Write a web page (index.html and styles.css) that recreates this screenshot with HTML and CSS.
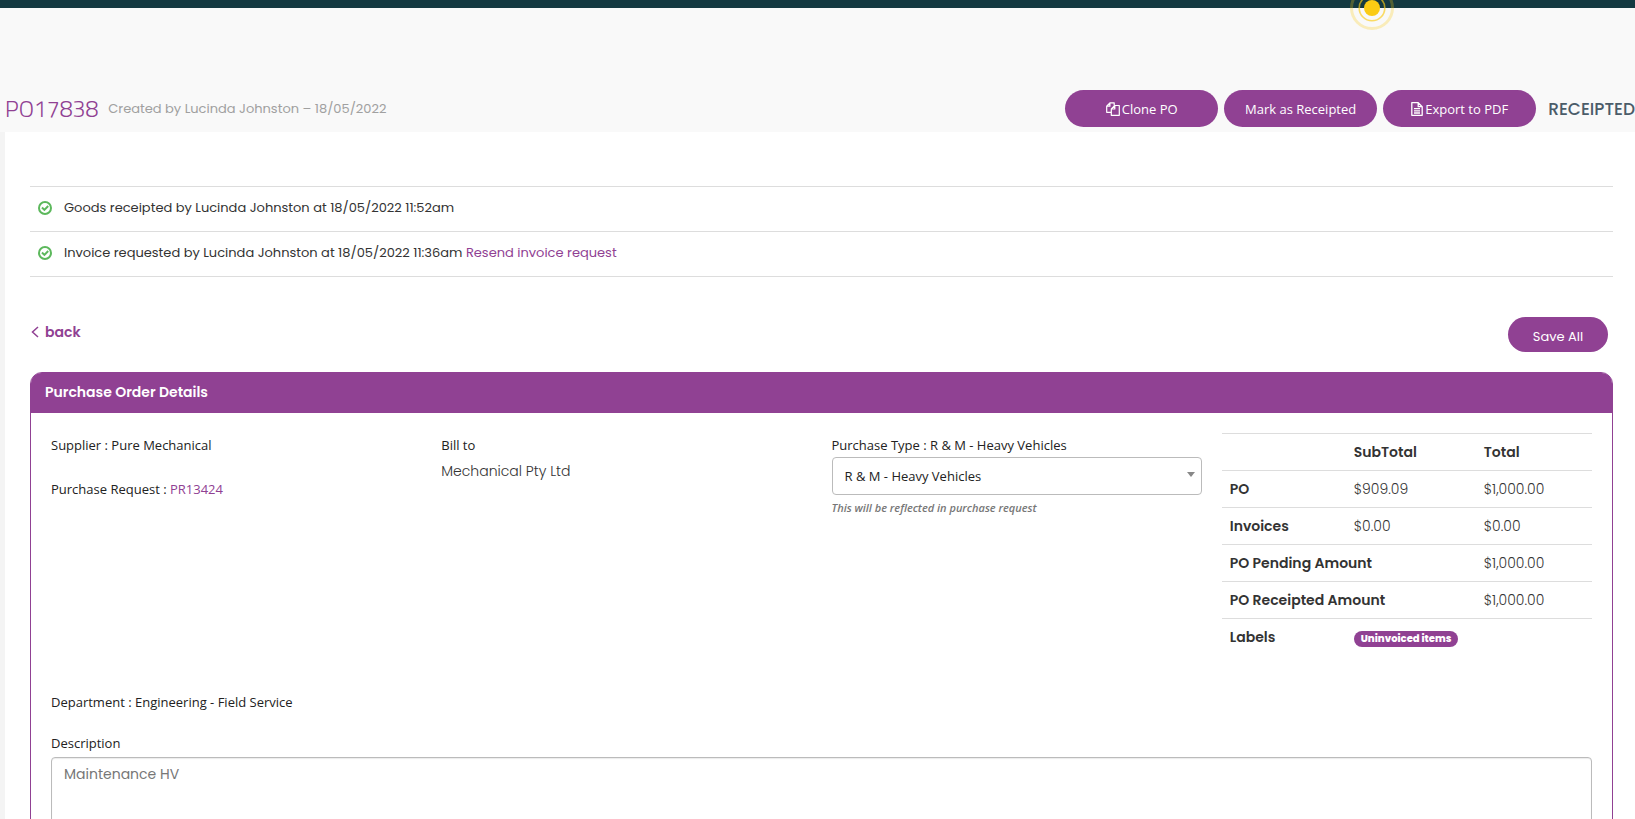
FILE: index.html
```html
<!DOCTYPE html>
<html lang="en">
<head>
<meta charset="utf-8">
<title>PO17838</title>
<link rel="stylesheet" href="styles.css">
</head>
<body>
<header class="topbar">
  <svg class="beacon" width="44" height="44" viewBox="0 0 44 44" aria-hidden="true">
    <circle cx="22" cy="22" r="20.5" fill="none" stroke="#fbcb14" stroke-opacity=".27" stroke-width="3"/>
    <circle cx="22" cy="22" r="12.8" fill="none" stroke="#fbcb14" stroke-opacity=".65" stroke-width="1.6"/>
    <circle cx="22" cy="22" r="8" fill="#fbcb14"/>
  </svg>
</header>
<div class="page-head">
  <h1 class="title">PO17838</h1>
  <span class="created">Created by Lucinda Johnston – 18/05/2022</span>
  <div class="actions">
    <button class="btn" type="button">
      <svg width="14" height="14" viewBox="0 0 14 14" fill="none" stroke="#fff" stroke-width="1.2" stroke-linejoin="round" aria-hidden="true">
        <path d="M5.2 10.3H.7V4.2L3.9.8h4.3v2.6M3.9.8v3.4H.7"/>
        <path d="M8.8 3.5h4.5v9.8H5.3V7zM8.8 3.5V7H5.3"/>
      </svg>Clone PO</button>
    <button class="btn" type="button">Mark as Receipted</button>
    <button class="btn" type="button">
      <svg width="12" height="14" viewBox="0 0 12 14" fill="none" stroke="#fff" stroke-width="1.3" stroke-linejoin="round" aria-hidden="true">
        <path d="M.8.7h6.4l4 4v8.6H.8zM7.2.7v4h4M3 6.6h6M3 8.8h6M3 11h6"/>
      </svg>Export to PDF</button>
    <span class="status">RECEIPTED</span>
  </div>
</div>
<main class="content">
  <ul class="events">
    <li>
      <svg class="tick" width="14" height="14" viewBox="0 0 14 14" fill="none" stroke="#5cb85c" stroke-width="2" aria-hidden="true"><circle cx="7" cy="7" r="6"/><path d="M4 6.5l2.4 2.4L10.2 5"/></svg>
      <span>Goods receipted by Lucinda Johnston at 18/05/2022 11:52am</span>
    </li>
    <li>
      <svg class="tick" width="14" height="14" viewBox="0 0 14 14" fill="none" stroke="#5cb85c" stroke-width="2" aria-hidden="true"><circle cx="7" cy="7" r="6"/><path d="M4 6.5l2.4 2.4L10.2 5"/></svg>
      <span>Invoice requested by Lucinda Johnston at 18/05/2022 11:36am <a href="#">Resend invoice request</a></span>
    </li>
  </ul>
  <div class="toolbar">
    <a class="back" href="#"><svg width="8" height="12" viewBox="0 0 8 12" fill="none" stroke="#904193" stroke-width="1.5" aria-hidden="true"><path d="M7 1L1.5 6 7 11"/></svg>back</a>
    <button class="btn btn-save" type="button">Save All</button>
  </div>
  <section class="panel">
    <h2 class="panel-title">Purchase Order Details</h2>
    <div class="panel-body">
      <div class="details">
        <div class="col">
          <p class="label">Supplier : Pure Mechanical</p>
          <p class="label request">Purchase Request : <a href="#">PR13424</a></p>
        </div>
        <div class="col">
          <p class="label">Bill to</p>
          <p class="bill">Mechanical Pty Ltd</p>
        </div>
        <div class="col">
          <label class="label" for="type">Purchase Type : R &amp; M - Heavy Vehicles</label>
          <div class="select-wrap">
            <select id="type"><option>R &amp; M - Heavy Vehicles</option></select>
            <svg class="caret" width="8" height="5" viewBox="0 0 8 5" aria-hidden="true"><path d="M0 0h8L4 5z" fill="#888"/></svg>
          </div>
          <p class="hint">This will be reflected in purchase request</p>
        </div>
        <table class="totals">
          <tr><th class="c1"></th><th class="c2">SubTotal</th><th>Total</th></tr>
          <tr><th>PO</th><td>$909.09</td><td>$1,000.00</td></tr>
          <tr><th>Invoices</th><td>$0.00</td><td>$0.00</td></tr>
          <tr><th colspan="2">PO Pending Amount</th><td>$1,000.00</td></tr>
          <tr><th colspan="2">PO Receipted Amount</th><td>$1,000.00</td></tr>
          <tr><th>Labels</th><td colspan="2"><span class="badge">Uninvoiced items</span></td></tr>
        </table>
      </div>
      <p class="label department">Department : Engineering - Field Service</p>
      <label class="label description" for="desc">Description</label>
      <textarea id="desc" class="desc" rows="5">Maintenance HV</textarea>
    </div>
  </section>
</main>
</body>
</html>
```

FILE: styles.css
```css
* { box-sizing: border-box; }
body {
  margin: 0;
  background: #f9f9f9;
  color: #333;
  font: 14px/20px Poppins, Inter, "Open Sans", sans-serif;
  overflow: hidden;
}
h1, h2, p, ul { margin: 0; padding: 0; }
a { color: #904193; text-decoration: none; }

.topbar { position: relative; height: 8px; background: #143941; }
.beacon { position: absolute; top: -14px; right: 241px; }

.page-head {
  display: flex;
  align-items: center;
  height: 124px;
  padding: 77px 0 0 5px;
  white-space: nowrap;
}
.title { color: #904193; font: 300 23px/32px "Titillium Web", Roboto, sans-serif; }
.created { margin-left: 10px; color: #a0a0a0; font-size: 13px; }
.actions { display: flex; align-items: center; gap: 6px; margin-left: auto; }
.btn {
  display: flex;
  align-items: center;
  justify-content: center;
  gap: 2px;
  width: 153px;
  height: 37px;
  padding: 0;
  border: 0;
  border-radius: 19px;
  background: #904193;
  color: #fff;
  font: 13px/18px "Open Sans", sans-serif;
}
.status { margin-left: 6px; color: #4b5c69; font-size: 17px; font-weight: 500; }

.content { margin-left: 5px; padding: 54px 22px 0 25px; background: #fff; box-shadow: -5px 0 0 #f4f4f4; }
.events { list-style: none; border-top: 1px solid #ddd; font-size: 13px; }
.events li {
  display: flex;
  align-items: center;
  gap: 12px;
  height: 45px;
  padding: 0 0 2px 8px;
  border-bottom: 1px solid #ddd;
}

.toolbar { display: flex; justify-content: space-between; padding: 40px 5px 20px 1px; }
.back { display: flex; align-items: center; gap: 6px; height: 30px; font-weight: 600; }
.btn-save { width: 100px; height: 35px; padding-top: 4px; font-family: Poppins, Inter, sans-serif; }

.panel { border: 1px solid #904193; border-radius: 12px 12px 0 0; }
.panel-title {
  padding: 9px 14px 11px;
  border-radius: 10px 10px 0 0;
  background: #904193;
  color: #fff;
  font-size: 14px;
  line-height: 20px;
  font-weight: 600;
}
.panel-body { padding: 20px; }
.details { display: grid; grid-template-columns: repeat(4, 1fr); gap: 20px; }
.label { display: block; color: #222; font: 500 13px/24px "Open Sans", sans-serif; }
.request { margin-top: 20px; }
.bill { line-height: 28px; font-weight: 300; }
.select-wrap { position: relative; }
select {
  appearance: none;
  display: block;
  width: 100%;
  height: 38px;
  padding: 0 12px;
  border: 1px solid #bbb;
  border-radius: 4px;
  background: #fff;
  color: #222;
  font: 500 13px/18px "Open Sans", sans-serif;
}
.caret { position: absolute; right: 7px; top: 15px; }
.hint { color: #777; font: italic 600 11px/26px "Open Sans", sans-serif; }

.totals { width: 100%; border-collapse: collapse; table-layout: fixed; }
.c1 { width: 124px; }
.c2 { width: 130px; }
.totals th, .totals td { height: 37px; padding: 0 8px; border-top: 1px solid #ddd; text-align: left; font-weight: 300; }
.totals th { font-weight: 600; }
.badge {
  display: inline-block;
  padding: 0 7px;
  border-radius: 8px;
  background: #904193;
  color: #fff;
  font-size: 10px;
  line-height: 16px;
  font-weight: 800;
  vertical-align: text-bottom;
}

.department { margin-top: 34px; }
.description { margin-top: 17px; }
.desc {
  display: block;
  width: 100%;
  margin-top: 2px;
  padding: 6px 12px;
  border: 1px solid #bbb;
  border-radius: 4px;
  box-shadow: inset 0 1px 1px rgba(0, 0, 0, .08);
  color: #777;
  font: 14px/20px Poppins, Inter, sans-serif;
  resize: none;
}
```
